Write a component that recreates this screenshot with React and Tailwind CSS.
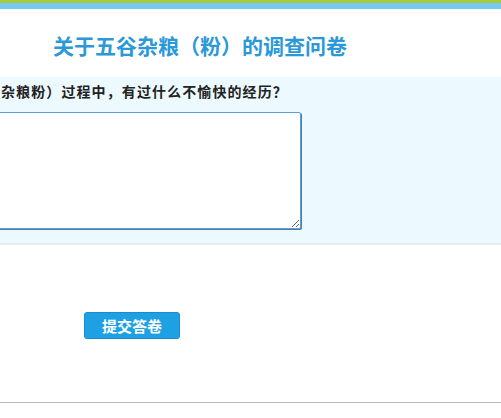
import React from 'react';

const App = () => {
  return (
    <div className="w-[501px] h-[418px] overflow-hidden bg-white font-['Noto_Sans_CJK_SC','Noto_Sans',sans-serif]">
      {/* top banner edge */}
      <div className="h-[3px] bg-[#a9c93c]"></div>
      <div className="h-[6px] bg-[#76c9ef]"></div>

      {/* title */}
      <div className="pt-[22px] pb-[18px] pl-[53px]">
        <h1 className="text-[21px] leading-[28px] font-bold text-[#2b98d8] whitespace-nowrap">
          关于五谷杂粮（粉）的调查问卷
        </h1>
      </div>

      {/* question block */}
      <div className="bg-[#ecf9fe] pt-[4px] pb-[14px] border-b-2 border-[#e2f0f5]">
        <p className="pl-[1px] text-[14px] tracking-[1.1px] leading-[20px] font-bold text-[#222] whitespace-nowrap">
          杂粮粉）过程中，有过什么不愉快的经历？
        </p>
        <textarea
          className="block mt-[11px] ml-[-99px] w-[400px] h-[117px] bg-white border border-[#5b9fd6] rounded-[2px] shadow-[1px_1px_0_#4a7fa8] outline-none resize"
        ></textarea>
      </div>

      {/* submit */}
      <div className="pt-[67px] pl-[84px]">
        <button className="w-[96px] h-[27px] rounded-[3px] bg-[#1ea1e2] border border-[#1a8ccb] text-white text-[15px] font-bold leading-none">
          提交答卷
        </button>
      </div>

      <div className="mt-[63px] h-px bg-[#bbbbbb]"></div>
    </div>
  );
};

export default App;
